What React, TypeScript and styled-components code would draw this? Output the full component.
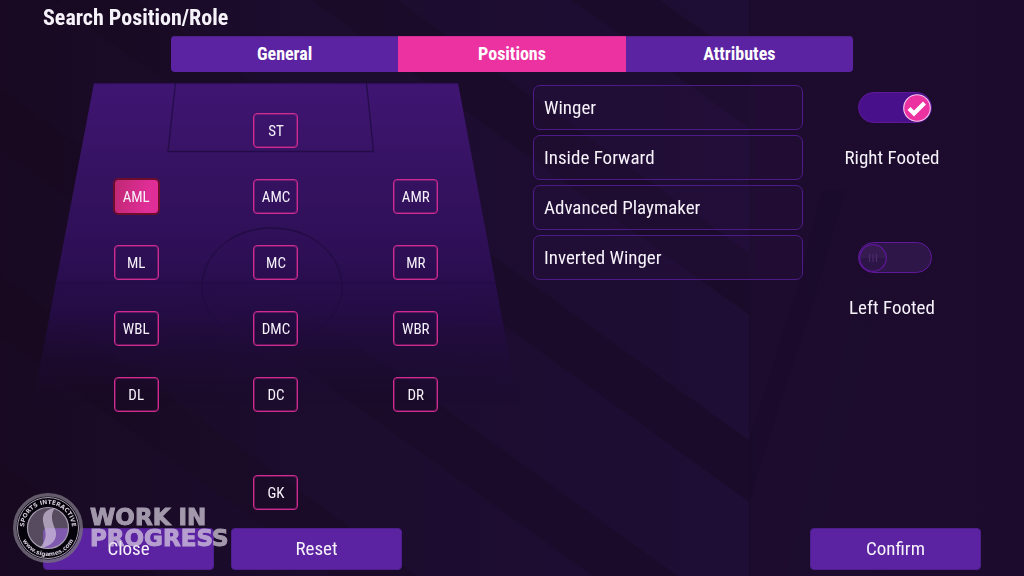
import React, { useState } from "react";
import styled, { createGlobalStyle } from "styled-components";

const GlobalStyle = createGlobalStyle`
  *, *::before, *::after { box-sizing: border-box; }
  body {
    margin: 0;
    background: #1b0b2b;
    color: #f6f2fa;
    font-family: "Roboto Condensed", Roboto, sans-serif;
    font-size: 19px;
    line-height: 24px;
  }
  button { font: inherit; color: inherit; cursor: pointer; }
`;

const Backdrop = styled.svg`
  position: fixed;
  inset: 0;
  z-index: -1;
  width: 100%;
  height: 100%;
`;

const Screen = styled.div`
  position: relative;
  display: flex;
  flex-direction: column;
  min-height: 100vh;
  padding: 4px 43px 6px;
`;

const Title = styled.h1`
  margin: 0;
  font-size: 22px;
  line-height: 28px;
  font-weight: 700;
`;

const Tabs = styled.nav`
  display: flex;
  width: 73%;
  max-width: 682px;
  margin: 4px auto 0;
  border-radius: 4px;
  overflow: hidden;
`;

const Tab = styled.button<{ $active: boolean }>`
  flex: 1;
  height: 36px;
  padding: 0 0 2px;
  border: 0;
  border-top: 1px solid ${(p) => (p.$active ? "#d42f94" : "#4d2383")};
  background: ${(p) => (p.$active ? "#ec32a1" : "#5b22a2")};
  color: #fff;
  font-size: 18px;
  font-weight: 700;
`;

const Content = styled.main`
  flex: 1;
  display: grid;
  grid-template-columns: 490fr 270fr 178fr;
  align-items: start;
  padding-top: 11px;
`;

const PitchPanel = styled.section`
  display: grid;
  margin-right: 24px;
`;

const PitchDrawing = styled.svg`
  grid-area: 1 / 1;
  width: 100%;
  height: 320px;
  overflow: visible;
`;

const PositionGrid = styled.div`
  grid-area: 1 / 1;
  display: grid;
  grid-template-columns: repeat(3, 30%);
  grid-template-rows: repeat(5, 66px) 35px;
  justify-content: center;
  justify-items: center;
  padding-top: 30px;
`;

const PositionButton = styled.button<{ $column: number; $row: number; $active: boolean }>`
  grid-column: ${(p) => p.$column};
  grid-row: ${(p) => p.$row};
  width: 45px;
  height: 35px;
  padding: 0;
  border: 1px solid ${(p) => (p.$active ? "#6d0d2c" : "#cf2b90")};
  border-radius: 4px;
  background: ${(p) =>
    p.$active ? "linear-gradient(100deg, #c02873, #e02e98 75%)" : "transparent"};
  box-shadow: ${(p) => (p.$active ? "0 0 0 1px #6d0d2c" : "inset 0 0 0 1px #cf2b9066")};
  font-size: 15px;
`;

const KeeperSlot = styled.div`
  grid-area: 6 / 2;
  padding-top: 32px;
`;

const RoleList = styled.ul`
  display: grid;
  gap: 5px;
  margin: 0;
  padding: 2px 0 0;
  list-style: none;
`;

const RoleButton = styled.button`
  width: 100%;
  height: 45px;
  padding: 0 10px;
  border: 1px solid #4d1b87;
  border-radius: 7px;
  background: rgba(48, 20, 78, 0.18);
  text-align: left;
`;

const FootOptions = styled.div`
  display: flex;
  flex-direction: column;
  align-items: center;
  gap: 72px;
  padding-top: 9px;
`;

const FootOption = styled.label`
  display: flex;
  flex-direction: column;
  align-items: center;
  gap: 23px;
  cursor: pointer;
`;

const Switch = styled.span`
  display: grid;
  align-items: center;
  margin-left: 6px;
`;

const SwitchInput = styled.input`
  grid-area: 1 / 1;
  appearance: none;
  width: 74px;
  height: 31px;
  margin: 0;
  border: 1px solid #5f189c;
  border-radius: 16px;
  background: #2e1649;
  &:checked { background: #49108b; }
`;

const Thumb = styled.svg<{ $on: boolean }>`
  grid-area: 1 / 1;
  justify-self: ${(p) => (p.$on ? "end" : "start")};
  width: 28px;
  height: 28px;
  margin: 0 1px;
  pointer-events: none;
`;

const Footer = styled.footer`
  display: flex;
  gap: 17px;
`;

const FooterButton = styled.button<{ $end?: boolean }>`
  width: 171px;
  height: 42px;
  margin-left: ${(p) => (p.$end ? "auto" : "0")};
  padding: 0;
  border: 1px solid #4e1e8c;
  border-radius: 4px;
  background: #5b22a2;
`;

const Watermark = styled.div`
  position: absolute;
  left: 13px;
  bottom: 13px;
  display: flex;
  align-items: center;
  gap: 7px;
  pointer-events: none;
`;

const Badge = styled.svg`
  width: 70px;
  height: 70px;
`;

const WatermarkText = styled.div`
  color: #ddd5e4;
  -webkit-text-stroke: 1px #ddd5e4;
  opacity: 0.7;
  font-family: "DejaVu Sans", sans-serif;
  font-size: 23px;
  font-weight: 700;
  line-height: 21px;
`;

const positions = [
  { name: "ST", column: 2, row: 1 },
  { name: "AML", column: 1, row: 2 },
  { name: "AMC", column: 2, row: 2 },
  { name: "AMR", column: 3, row: 2 },
  { name: "ML", column: 1, row: 3 },
  { name: "MC", column: 2, row: 3 },
  { name: "MR", column: 3, row: 3 },
  { name: "WBL", column: 1, row: 4 },
  { name: "DMC", column: 2, row: 4 },
  { name: "WBR", column: 3, row: 4 },
  { name: "DL", column: 1, row: 5 },
  { name: "DC", column: 2, row: 5 },
  { name: "DR", column: 3, row: 5 },
];

const roles = ["Winger", "Inside Forward", "Advanced Playmaker", "Inverted Winger"];
const tabs = ["General", "Positions", "Attributes"];
const bands = [-435, -248, -61, 128, 315, 502, 689, 876, 1063];

function Stripes() {
  return (
    <Backdrop viewBox="0 0 1024 576" preserveAspectRatio="none" aria-hidden="true">
      <defs>
        <linearGradient id="stripe">
          <stop offset="0" stopColor="#2a1450" stopOpacity="0.04" />
          <stop offset="0.6" stopColor="#2a1450" stopOpacity="0.15" />
          <stop offset="1" stopColor="#2a1450" stopOpacity="0.26" />
        </linearGradient>
        <linearGradient id="base">
          <stop offset="0" stopColor="#180920" />
          <stop offset="0.3" stopColor="#1a0b29" />
          <stop offset="0.73" stopColor="#1b0b2b" />
          <stop offset="0.74" stopColor="#1e0c2e" />
          <stop offset="1" stopColor="#1c0b2d" />
        </linearGradient>
      </defs>
      <rect width="1024" height="576" fill="url(#base)" />
      {bands.map((y) => (
        <path key={y} d={`M0 ${y - 539}L749 ${y}V${y + 125}L0 ${y - 414}Z`} fill="url(#stripe)" />
      ))}
      <path d="M749 440L800 280L822 190H845L820 280L749 502Z" fill="#190a29" opacity=".6" />
      <path d="M786 576L818 450L860 290H880L840 450L812 576Z" fill="#190b2b" opacity=".5" />
    </Backdrop>
  );
}

function Pitch() {
  return (
    <PitchDrawing viewBox="43 83 466 320" preserveAspectRatio="none" aria-hidden="true">
      <defs>
        <linearGradient id="grass" x1="0" y1="0" x2="0" y2="1">
          <stop offset="0" stopColor="#3f1573" />
          <stop offset="0.25" stopColor="#371363" />
          <stop offset="0.55" stopColor="#2d0f55" />
          <stop offset="0.72" stopColor="#260d49" stopOpacity="0.85" />
          <stop offset="1" stopColor="#1e0b36" stopOpacity="0" />
        </linearGradient>
      </defs>
      <path d="M94 83H458L518 403H33Z" fill="url(#grass)" />
      <g fill="none" stroke="#210c43" strokeWidth="1.3">
        <path d="M94 83.500H458" strokeOpacity=".5" />
        <path d="M175.500 83L168 151.500H373.500L366.500 83" strokeOpacity=".85" />
        <path d="M55 283H496" strokeOpacity=".7" />
        <path d="M202 288C202 253 234 228 272 228S342 253 342 288C342 316 314 341 272 341S202 316 202 288Z" strokeOpacity=".9" />
      </g>
    </PitchDrawing>
  );
}

function FootSwitch({ label, initial }: { label: string; initial: boolean }) {
  const [on, setOn] = useState(initial);
  return (
    <FootOption>
      <Switch>
        <SwitchInput type="checkbox" checked={on} onChange={() => setOn(!on)} />
        <Thumb $on={on} viewBox="0 0 28 28" aria-hidden="true">
          {on ? (
            <>
              <circle cx="14" cy="14" r="13.300" fill="#ec32a1" stroke="#f6c9ec" strokeWidth="1.100" />
              <path d="M6 14.500L11 19.500L21.500 9" fill="none" stroke="#fff" strokeWidth="4.200" />
            </>
          ) : (
            <>
              <circle cx="14" cy="14" r="13.300" fill="#2d1548" />
              <path d="M1 14A13 13 0 0 1 27 14Z" fill="#361b51" />
              <circle cx="14" cy="14" r="13.300" fill="none" stroke="#5f189c" strokeWidth="1.200" />
              <path d="M10.500 10V18M14 10V18M17.500 10V18" stroke="#4f2c70" />
            </>
          )}
        </Thumb>
      </Switch>
      <span>{label}</span>
    </FootOption>
  );
}

function StudioBadge() {
  return (
    <Badge viewBox="0 0 70 70" aria-hidden="true">
      <defs>
        <path id="arcTop" d="M12 42A24 24 0 1 1 58 42" />
        <path id="arcBottom" d="M7 40A28.500 28.500 0 0 0 63 40" />
      </defs>
      <circle cx="35" cy="35" r="33" fill="none" stroke="#77707f" strokeOpacity=".8" strokeWidth="4" />
      <circle cx="35" cy="35" r="26" fill="none" stroke="#06020b" strokeWidth="11" />
      <circle cx="35" cy="35" r="30.500" fill="none" stroke="#a59dad" strokeWidth="1" />
      <circle cx="35" cy="35" r="20.500" fill="#b5acbd" fillOpacity=".4" stroke="#a59dad" strokeWidth="1.200" />
      <path
        d="M42 15C33 16 29 21 30 28C31 36 37 43 27 55C38 54 46 46 42 36C39 28 37 22 42 15Z"
        fill="#d6c9e2"
        fillOpacity=".65"
      />
      <g fill="#d2cad8" fontFamily="DejaVu Sans" fontWeight="700" textAnchor="middle">
        <text fontSize="6">
          <textPath href="#arcTop" startOffset="50%">SPORTS INTERACTIVE</textPath>
        </text>
        <text fontSize="6">
          <textPath href="#arcBottom" startOffset="50%">www.sigames.com</textPath>
        </text>
      </g>
    </Badge>
  );
}

export default function App() {
  const [tab, setTab] = useState("Positions");
  const [position, setPosition] = useState("AML");
  return (
    <>
      <GlobalStyle />
      <Stripes />
      <Screen>
        <Title>Search Position/Role</Title>
        <Tabs>
          {tabs.map((name) => (
            <Tab key={name} $active={name === tab} onClick={() => setTab(name)}>
              {name}
            </Tab>
          ))}
        </Tabs>
        <Content>
          <PitchPanel>
            <Pitch />
            <PositionGrid>
              {positions.map((p) => (
                <PositionButton
                  key={p.name}
                  $column={p.column}
                  $row={p.row}
                  $active={p.name === position}
                  onClick={() => setPosition(p.name)}
                >
                  {p.name}
                </PositionButton>
              ))}
              <KeeperSlot>
                <PositionButton
                  $column={1}
                  $row={1}
                  $active={position === "GK"}
                  onClick={() => setPosition("GK")}
                >
                  GK
                </PositionButton>
              </KeeperSlot>
            </PositionGrid>
          </PitchPanel>
          <RoleList>
            {roles.map((role) => (
              <li key={role}>
                <RoleButton>{role}</RoleButton>
              </li>
            ))}
          </RoleList>
          <FootOptions>
            <FootSwitch label="Right Footed" initial={true} />
            <FootSwitch label="Left Footed" initial={false} />
          </FootOptions>
        </Content>
        <Footer>
          <FooterButton>Close</FooterButton>
          <FooterButton>Reset</FooterButton>
          <FooterButton $end>Confirm</FooterButton>
        </Footer>
        <Watermark>
          <StudioBadge />
          <WatermarkText>
            WORK IN
            <br />
            PROGRESS
          </WatermarkText>
        </Watermark>
      </Screen>
    </>
  );
}
